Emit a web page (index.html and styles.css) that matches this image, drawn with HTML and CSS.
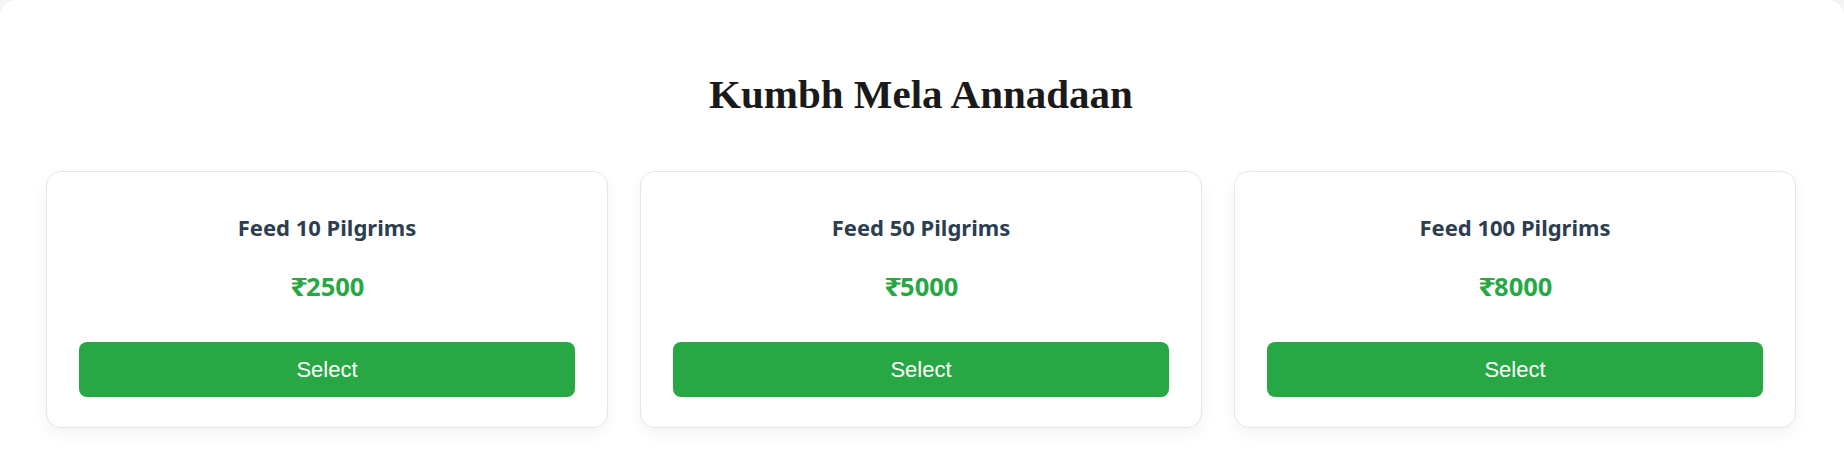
FILE: index.html
```html
<!DOCTYPE html>
<html lang="en">
<head>
<meta charset="utf-8">
<title>Kumbh Mela Annadaan</title>
<link rel="stylesheet" href="styles.css">
</head>
<body>
<main class="page">
  <h1 class="page-title">Kumbh Mela Annadaan</h1>
  <section class="plans">
    <div class="plan">
      <h3 class="plan-name">Feed 10 Pilgrims</h3>
      <p class="plan-price"><span class="currency">₹</span>2500</p>
      <button class="plan-btn" type="button">Select</button>
    </div>
    <div class="plan">
      <h3 class="plan-name">Feed 50 Pilgrims</h3>
      <p class="plan-price"><span class="currency">₹</span>5000</p>
      <button class="plan-btn" type="button">Select</button>
    </div>
    <div class="plan">
      <h3 class="plan-name">Feed 100 Pilgrims</h3>
      <p class="plan-price"><span class="currency">₹</span>8000</p>
      <button class="plan-btn" type="button">Select</button>
    </div>
  </section>
</main>
</body>
</html>
```

FILE: styles.css
```css
html, body {
  margin: 0;
  padding: 0;
}

body {
  background: #f3f4f6;
  font-family: "Noto Sans", sans-serif;
}

.page {
  background: #ffffff;
  border-radius: 16px;
  min-height: 600px;
  padding: 71px 48px 60px 46px;
  box-sizing: border-box;
}

.page-title {
  margin: 0 0 54px;
  text-align: center;
  font-family: "Liberation Serif", "Times New Roman", serif;
  font-weight: 700;
  font-size: 41px;
  line-height: 46px;
  color: #1a1a1a;
}

.plans {
  display: grid;
  grid-template-columns: repeat(3, 1fr);
  gap: 32px;
}

.plan {
  display: flex;
  flex-direction: column;
  align-items: stretch;
  text-align: center;
  background: #ffffff;
  border: 1px solid #e6e6e6;
  border-radius: 15px;
  padding: 40px 32px 30px;
  box-shadow: 0 6px 16px rgba(0, 0, 0, 0.05);
}

.plan-name {
  margin: 0;
  font-family: "Noto Sans", sans-serif;
  font-weight: 700;
  font-size: 22px;
  line-height: 30px;
  color: #2c3e50;
}

.plan-price {
  margin: 27px 0 0;
  font-family: "Noto Sans", sans-serif;
  font-weight: 700;
  font-size: 25.5px;
  line-height: 34px;
  color: #28a745;
}

.currency {
  display: inline-block;
  transform: scaleX(1.25);
  transform-origin: left center;
  margin-right: 2px;
}

.plan-btn {
  margin-top: 39px;
  height: 55px;
  border: none;
  border-radius: 8px;
  background: #28a745;
  color: #ffffff;
  font-family: "Liberation Sans", Arial, sans-serif;
  font-size: 22px;
  cursor: pointer;
}
```
